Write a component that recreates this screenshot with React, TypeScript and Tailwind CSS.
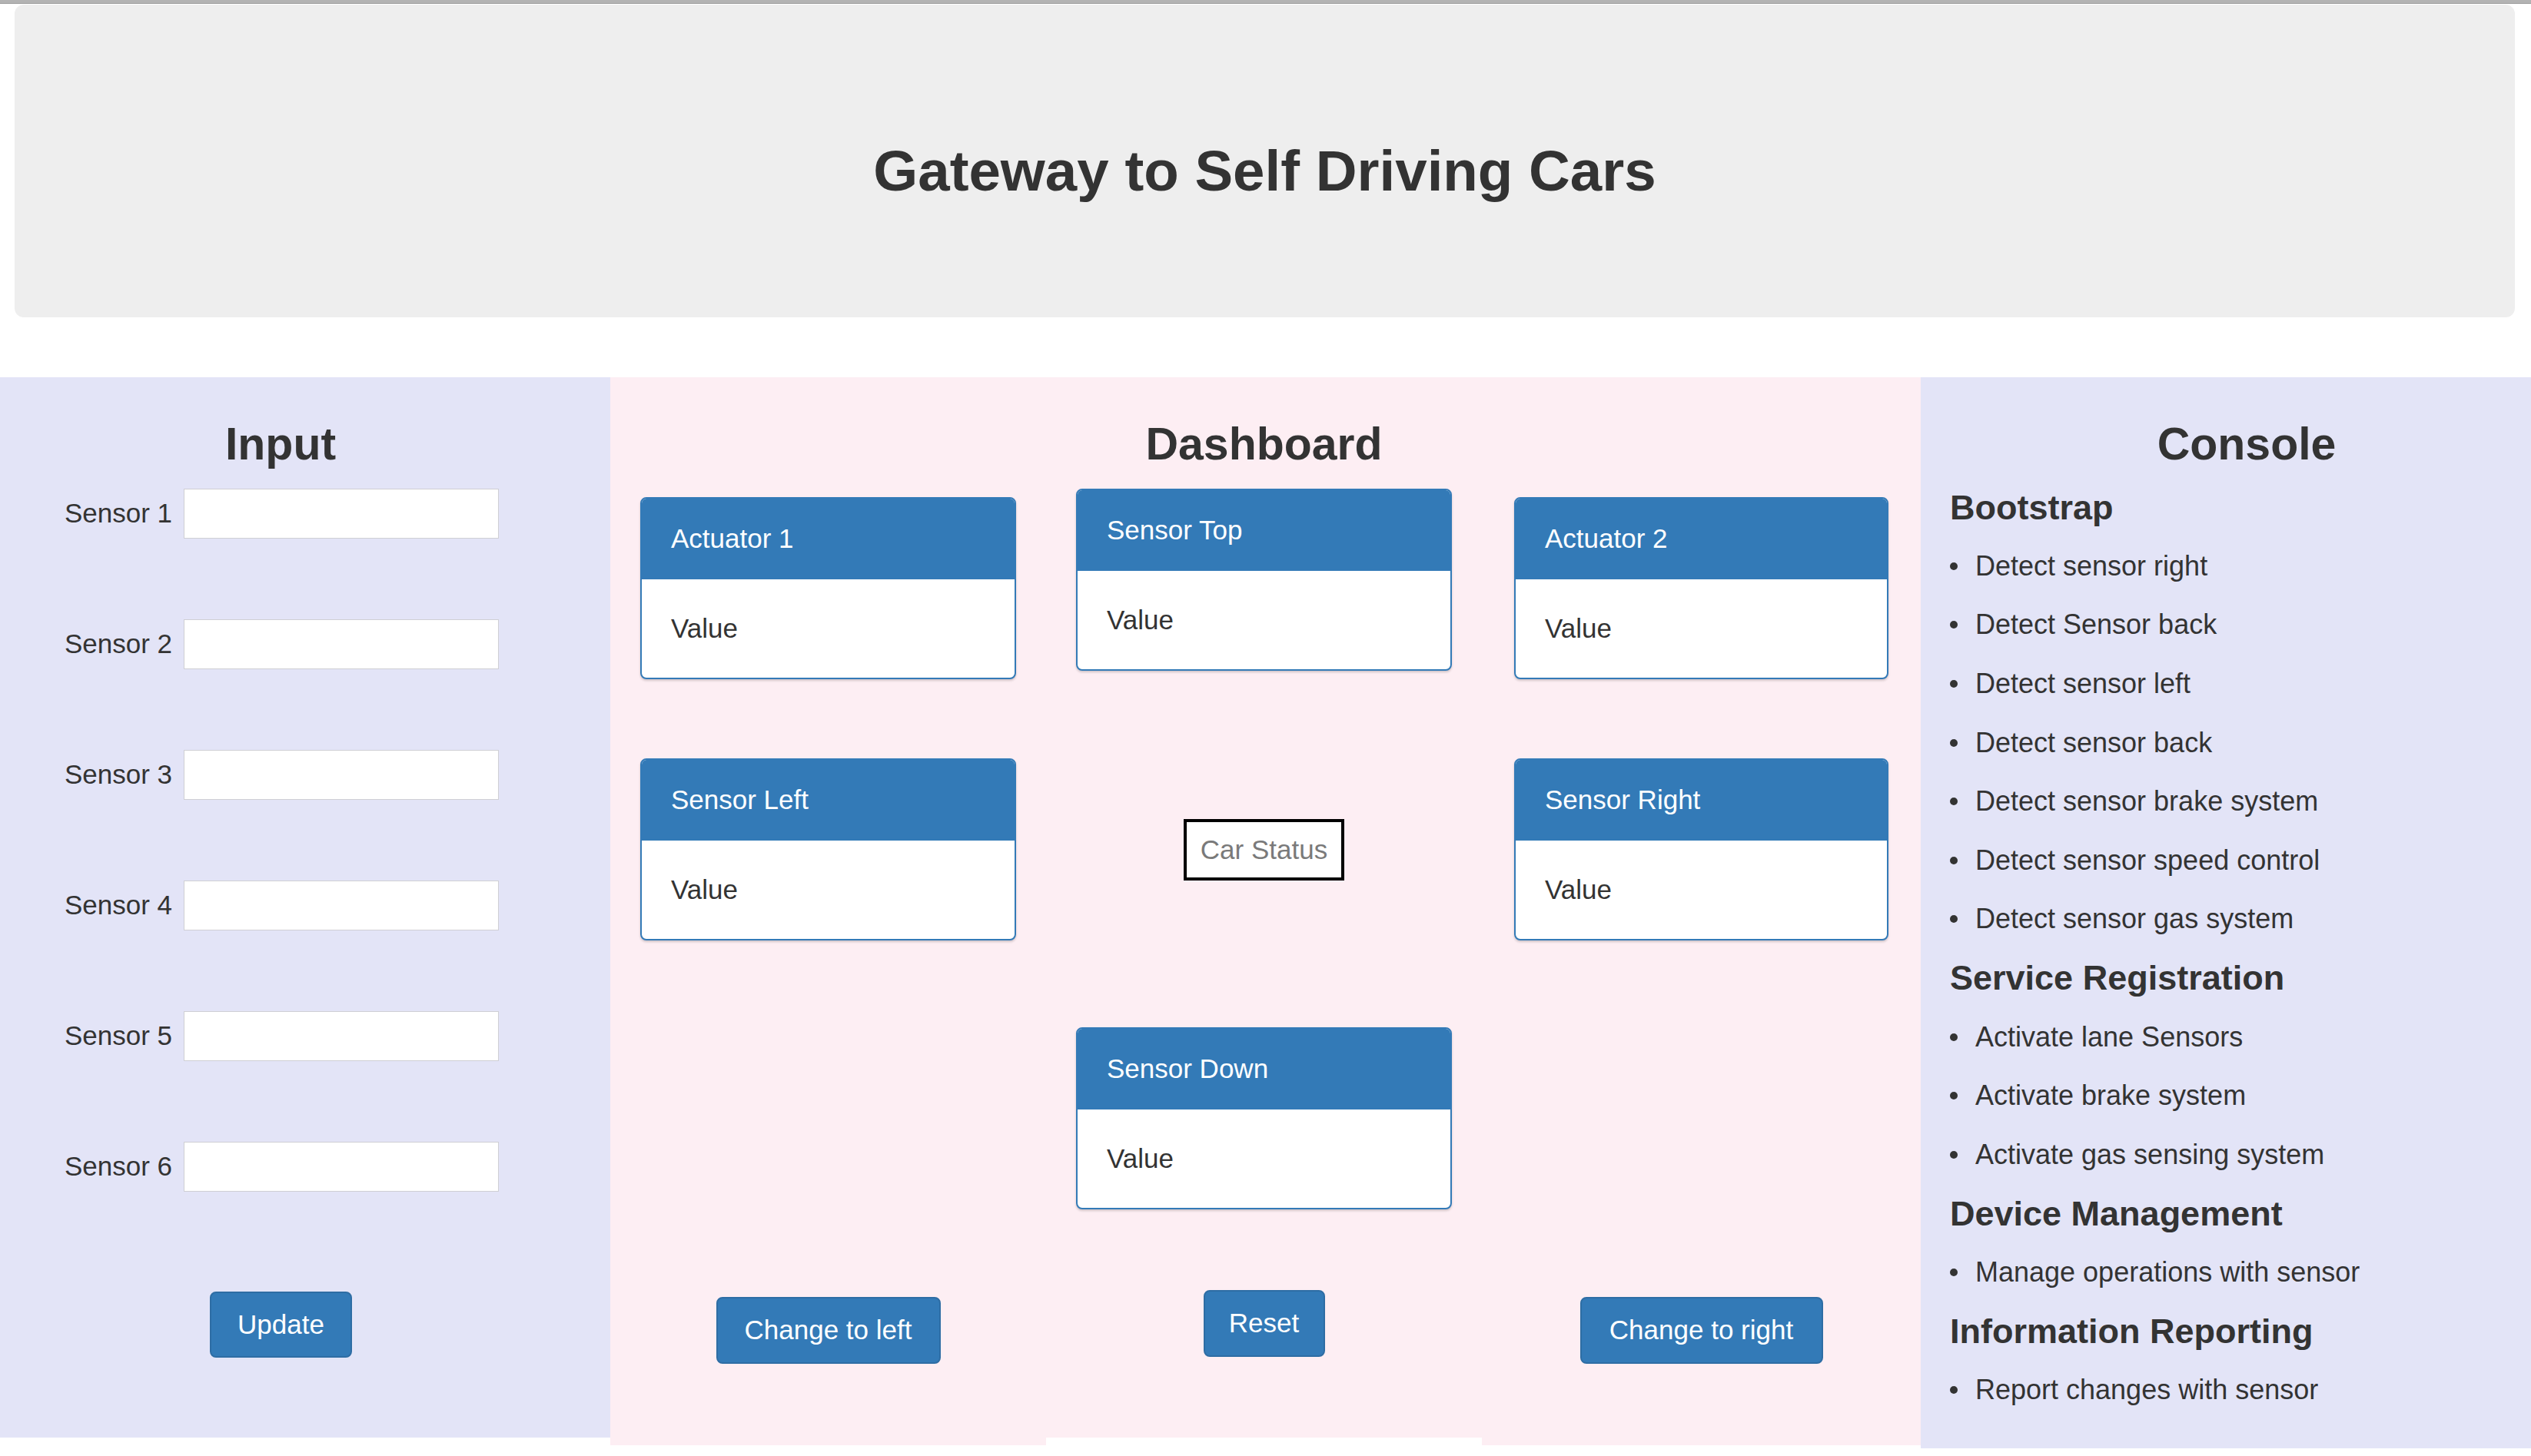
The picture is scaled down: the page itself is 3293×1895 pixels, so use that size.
import type { ReactNode } from "react";

const sensors = ["Sensor 1", "Sensor 2", "Sensor 3", "Sensor 4", "Sensor 5", "Sensor 6"];

type ConsoleLine = { kind: "head" | "item"; text: string };

const consoleLines: ConsoleLine[] = [
  { kind: "head", text: "Bootstrap" },
  { kind: "item", text: "Detect sensor right" },
  { kind: "item", text: "Detect Sensor back" },
  { kind: "item", text: "Detect sensor left" },
  { kind: "item", text: "Detect sensor back" },
  { kind: "item", text: "Detect sensor brake system" },
  { kind: "item", text: "Detect sensor speed control" },
  { kind: "item", text: "Detect sensor gas system" },
  { kind: "head", text: "Service Registration" },
  { kind: "item", text: "Activate lane Sensors" },
  { kind: "item", text: "Activate brake system" },
  { kind: "item", text: "Activate gas sensing system" },
  { kind: "head", text: "Device Management" },
  { kind: "item", text: "Manage operations with sensor" },
  { kind: "head", text: "Information Reporting" },
  { kind: "item", text: "Report changes with sensor" },
];

function Panel({ title }: { title: string }) {
  return (
    <div className="w-full rounded-[8px] border-2 border-[#337ab7] bg-white overflow-hidden shadow-[0_2px_3px_rgba(0,0,0,0.18)]">
      <div className="h-[105px] bg-[#337ab7] pl-[38px] flex items-center text-white text-[35px]">
        {title}
      </div>
      <div className="h-[128px] pl-[38px] flex items-center text-[35px] text-[#333]">
        Value
      </div>
    </div>
  );
}

function BlueButton({ children, className }: { children: ReactNode; className: string }) {
  return (
    <button
      className={`self-center shrink-0 rounded-[8px] border-2 border-[#2e6da4] bg-[#337ab7] text-white text-[35px] flex items-center justify-center ${className}`}
    >
      {children}
    </button>
  );
}

function Heading({ children, className = "" }: { children: ReactNode; className?: string }) {
  return (
    <h2 className={`mt-[47px] h-[80px] leading-[80px] text-center font-bold text-[59px] text-[#333] ${className}`}>
      {children}
    </h2>
  );
}

export default function App() {
  return (
    <div className="w-[3293px] h-[1895px] overflow-hidden bg-white text-[#333] [font-family:'Liberation_Sans',Arial,sans-serif]">
      {/* window chrome strip */}
      <div className="h-[5px] bg-[#b3b3b3] border-b border-[#9d9d9d]" />

      {/* jumbotron */}
      <div className="ml-[19px] mt-[1px] w-[3253px] h-[407px] rounded-[12px] bg-[#eeeeee] flex items-center justify-center pt-[27px]">
        <h1 className="font-bold text-[74.5px] text-[#333] leading-none">Gateway to Self Driving Cars</h1>
      </div>

      <div className="mt-[78px] flex items-start">
        {/* Input */}
        <div className="w-[794px] h-[1380px] bg-[#e3e4f7] flex flex-col">
          <Heading className="pr-[64px]">Input</Heading>
          <div className="mt-[18px] flex flex-col gap-[105px]">
            {sensors.map((s) => (
              <div key={s} className="flex items-center h-[65px]">
                <label className="w-[224px] text-right text-[35px]">{s}</label>
                <input
                  type="text"
                  className="ml-[15px] w-[410px] h-[65px] bg-white border border-[#cfcfd4] outline-0"
                />
              </div>
            ))}
          </div>
          <BlueButton className="mt-[130px] ml-[273px] self-start! w-[185px] h-[86px]">Update</BlueButton>
        </div>

        {/* Dashboard */}
        <div className="w-[567px] h-[1390px] bg-[#fdeef3] px-[39px] flex flex-col">
          <div className="mt-[156px]">
            <Panel title="Actuator 1" />
          </div>
          <div className="mt-[103px]">
            <Panel title="Sensor Left" />
          </div>
          <BlueButton className="mt-[464px] w-[292px] h-[87px]">Change to left</BlueButton>
        </div>

        <div className="w-[567px] h-[1380px] bg-[#fdeef3] px-[39px] flex flex-col">
          <Heading>Dashboard</Heading>
          <div className="mt-[18px]">
            <Panel title="Sensor Top" />
          </div>
          <div className="mt-[193px] self-center w-[209px] h-[80px] border-[4px] border-black bg-white flex items-center justify-center text-[35px] text-[#7a7a7a]">
            Car Status
          </div>
          <div className="mt-[191px]">
            <Panel title="Sensor Down" />
          </div>
          <BlueButton className="mt-[105px] w-[158px] h-[87px]">Reset</BlueButton>
        </div>

        <div className="w-[571px] h-[1390px] bg-[#fdeef3] px-[42px] flex flex-col">
          <div className="mt-[156px]">
            <Panel title="Actuator 2" />
          </div>
          <div className="mt-[103px]">
            <Panel title="Sensor Right" />
          </div>
          <BlueButton className="mt-[464px] w-[316px] h-[87px]">Change to right</BlueButton>
        </div>

        {/* Console */}
        <div className="w-[794px] h-[1394px] bg-[#e3e4f7] flex flex-col">
          <Heading className="pl-[54px]">Console</Heading>
          <div className="mt-[4px] flex flex-col">
            {consoleLines.map((l, i) =>
              l.kind === "head" ? (
                <div key={i} className="h-[76.6px] pl-[38px] flex items-center font-bold text-[45px]">
                  {l.text}
                </div>
              ) : (
                <div key={i} className="h-[76.6px] pl-[38px] flex items-center text-[36px]">
                  <span className="w-[10px] h-[10px] rounded-full bg-[#333]" />
                  <span className="ml-[23px]">{l.text}</span>
                </div>
              ),
            )}
          </div>
        </div>
      </div>
    </div>
  );
}
